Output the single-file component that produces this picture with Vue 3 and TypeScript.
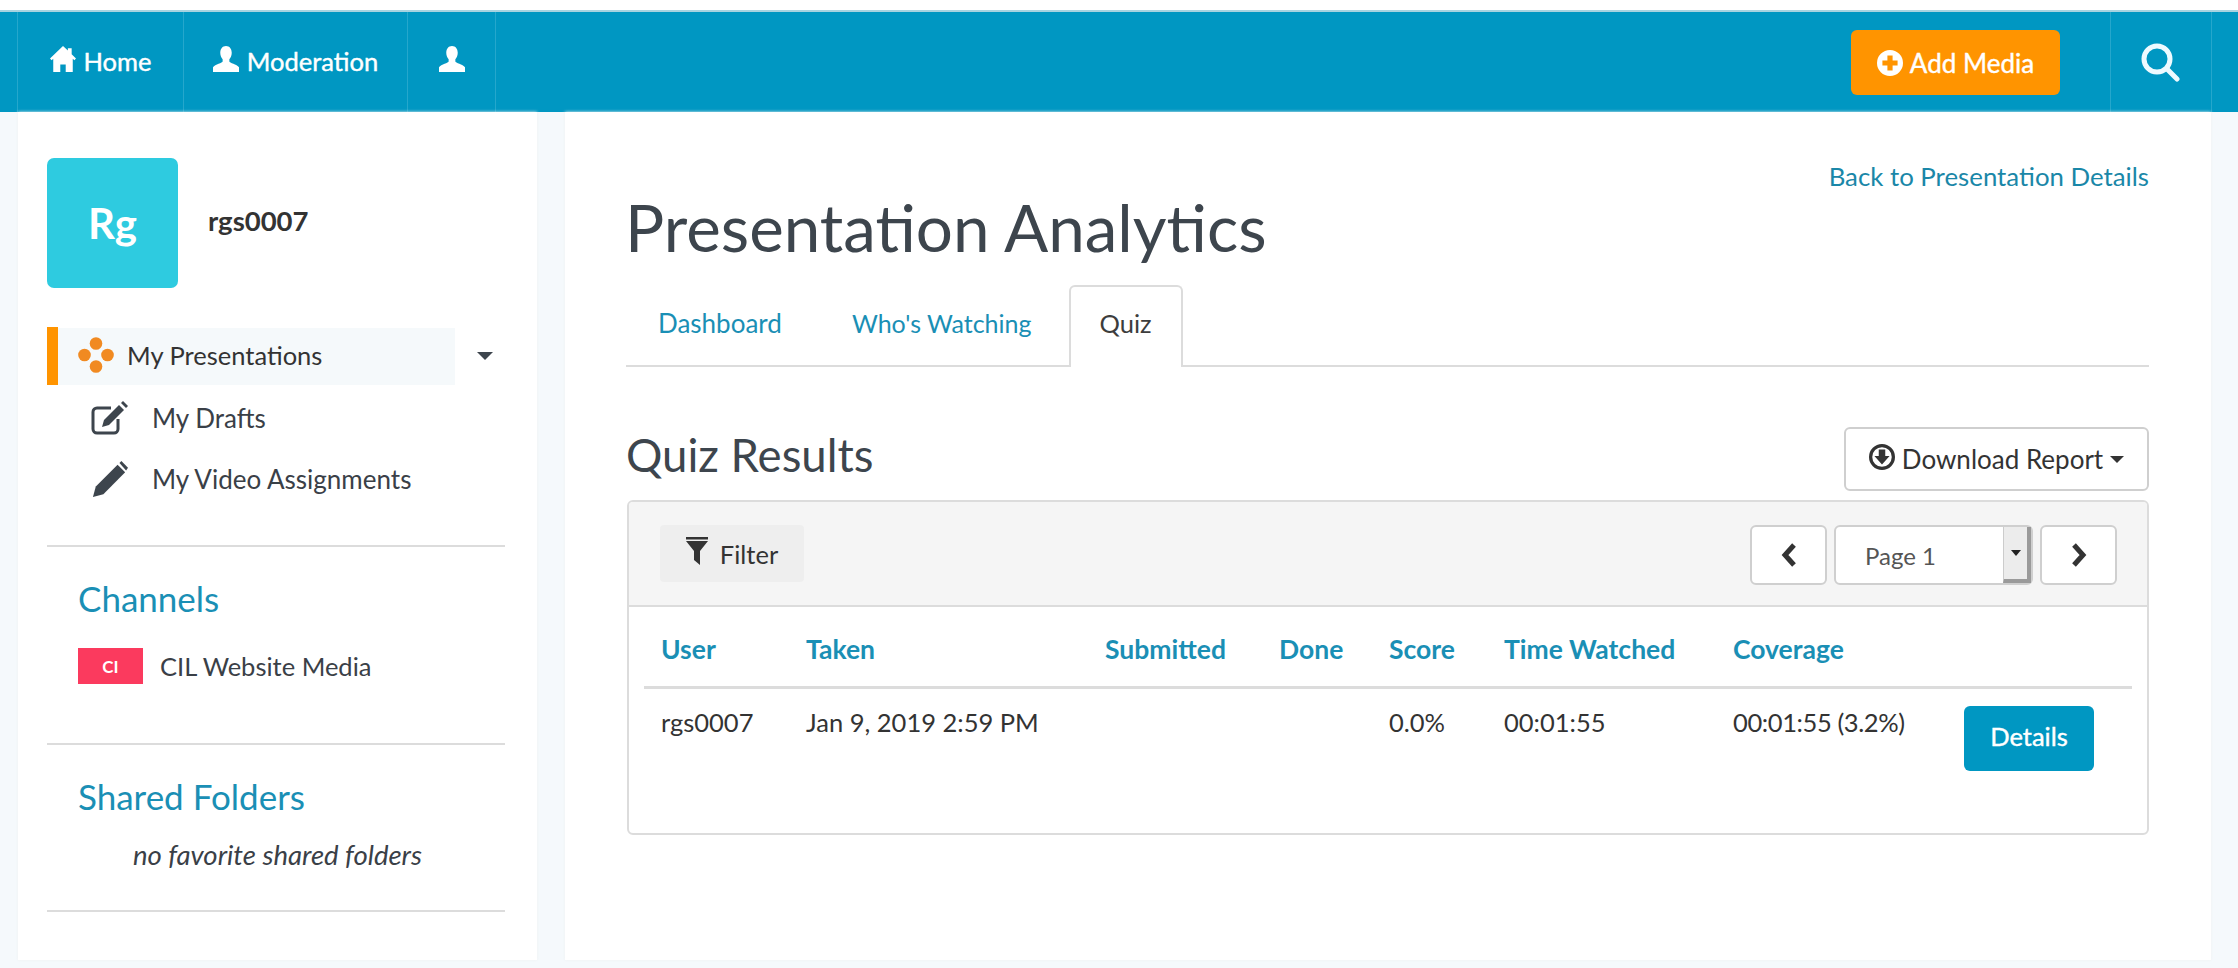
<template>
  <div class="page">
    <header class="topbar">
      <nav class="nav-left">
        <a v-for="item in navItems" :key="item.key" class="nav-item" :class="item.key">
          <svg v-if="item.key === 'home'" class="nav-icon" viewBox="0 0 24 24"><path :d="homePath" /></svg>
          <svg v-else class="nav-icon" viewBox="0 0 24 24"><path :d="userPath" /></svg>
          <span v-if="item.label">{{ item.label }}</span>
        </a>
      </nav>
      <div class="nav-right">
        <button class="add-media">
          <svg class="add-icon" viewBox="0 0 24 24"><path fill-rule="evenodd" d="M12 0a12 12 0 1 0 0 24a12 12 0 1 0 0-24zM9.6 5h4.800v4.600H19v4.800h-4.600V19H9.600v-4.600H5V9.600h4.600z" /></svg>
          Add Media
        </button>
        <a class="search-cell">
          <svg class="search-icon" viewBox="0 0 40 40"><circle cx="17" cy="17" r="13" /><path d="M27 27l10 10" /></svg>
        </a>
      </div>
    </header>

    <div class="columns">
      <aside class="sidebar">
        <div class="profile">
          <div class="avatar">Rg</div>
          <div class="username">rgs0007</div>
        </div>

        <div class="menu">
          <div class="menu-active">
            <div class="menu-active-inner">
              <svg class="flower" viewBox="0 0 36 36">
                <circle cx="18" cy="6.500" r="6.300" /><circle cx="6.500" cy="18" r="6.300" />
                <circle cx="29.500" cy="18" r="6.300" /><circle cx="18" cy="29.500" r="6.300" />
              </svg>
              My Presentations
            </div>
            <span class="caret big" />
          </div>
          <div class="menu-sub">
            <svg class="sub-icon" viewBox="0 0 38 34">
              <path class="stroke" d="M20 7H6a4 4 0 0 0-4 4v17a4 4 0 0 0 4 4h17a4 4 0 0 0 4-4V18" />
              <path d="M11 26l2-7L28 4l5 5-15 15z" /><path d="M30 2l2-2 5 5-2 2z" />
            </svg>
            My Drafts
          </div>
          <div class="menu-sub">
            <svg class="sub-icon" viewBox="0 0 38 38">
              <path d="M1 38l3-11L27 4l8 8-23 23z" /><path d="M29 2l2-2 7 7-2 3z" />
            </svg>
            My Video Assignments
          </div>
        </div>

        <div class="side-section channels">
          <h3>Channels</h3>
          <div class="channel-row"><span class="channel-badge">CI</span>CIL Website Media</div>
        </div>

        <div class="side-section folders">
          <h3>Shared Folders</h3>
          <p>no favorite shared folders</p>
        </div>
      </aside>

      <main class="content">
        <a class="back-link">Back to Presentation Details</a>
        <h1>Presentation Analytics</h1>

        <ul class="tabs">
          <li v-for="tab in tabs" :key="tab" :class="{ active: tab === 'Quiz' }">{{ tab }}</li>
        </ul>

        <div class="results-head">
          <h2>Quiz Results</h2>
          <button class="download">
            <svg class="dl-icon" viewBox="0 0 24 24"><path fill-rule="evenodd" d="M12 0a12 12 0 1 0 0 24a12 12 0 1 0 0-24zM12 3a9 9 0 1 1 0 18a9 9 0 1 1 0-18zM9 5h6v6h4l-7 8-7-8h4z" /></svg>
            Download Report
            <span class="caret" />
          </button>
        </div>

        <section class="panel">
          <div class="toolbar">
            <button class="filter">
              <svg class="filter-icon" viewBox="0 0 22 28"><path d="M0 0h22v2.500H0z" /><path d="M0 4h22l-8 10v14l-6-5V14z" /></svg>
              Filter
            </button>
            <div class="pager">
              <button class="page-btn">
                <svg viewBox="0 0 16 24"><path d="M13 2L4 12l9 10" /></svg>
              </button>
              <div class="page-select">
                <span>Page 1</span>
                <i class="select-arrow"><b /></i>
              </div>
              <button class="page-btn">
                <svg viewBox="0 0 16 24"><path d="M3 2l9 10-9 10" /></svg>
              </button>
            </div>
          </div>

          <table class="results">
            <colgroup>
              <col v-for="w in colWidths" :key="w.name" :style="{ width: w.px + 'px' }" />
            </colgroup>
            <thead>
              <tr>
                <th v-for="w in colWidths" :key="w.name">{{ w.name }}</th>
              </tr>
            </thead>
            <tbody>
              <tr>
                <td>rgs0007</td>
                <td>Jan 9, 2019 2:59 PM</td>
                <td></td>
                <td></td>
                <td>0.0%</td>
                <td>00:01:55</td>
                <td class="coverage">00:01:55 (3.2%)</td>
                <td class="action"><button class="details">Details</button></td>
              </tr>
            </tbody>
          </table>
        </section>
      </main>
    </div>
  </div>
</template>

<script setup lang="ts">
const navItems = [
  { key: 'home', label: 'Home' },
  { key: 'moderation', label: 'Moderation' },
  { key: 'profile', label: '' }
]

const tabs = ['Dashboard', "Who's Watching", 'Quiz']

const colWidths = [
  { name: 'User', px: 145 },
  { name: 'Taken', px: 299 },
  { name: 'Submitted', px: 174 },
  { name: 'Done', px: 110 },
  { name: 'Score', px: 115 },
  { name: 'Time Watched', px: 229 },
  { name: 'Coverage', px: 231 },
  { name: '', px: 185 }
]

const homePath = 'M12 0l4.500 4.200V2h3.500v5.500L24 11.500l-1.500 1.600-1.500-1.300V24h-6.500v-7h-5v7H3V11.800l-1.500 1.300L0 11.500z'
const userPath = 'M12 0c3.300 0 5.300 2.600 5.300 6.300 0 2.700-1 4.800-2.200 6v2c0 1.200 7 2.700 8.900 5.200V24H0v-4.500c1.900-2.500 8.900-4 8.900-5.200v-2c-1.200-1.200-2.200-3.300-2.200-6C6.700 2.600 8.700 0 12 0z'
</script>

<style>
html,
body {
  margin: 0;
  background: #f5f9fc;
}
</style>

<style scoped>
.page {
  width: 2238px;
  height: 968px;
  overflow: hidden;
  box-sizing: border-box;
  border-top: 10px solid #fff;
  font-family: Lato, "Open Sans", sans-serif;
  font-size: 25.5px;
  color: #333;
}

.topbar {
  height: 102px;
  box-sizing: border-box;
  border-top: 2px solid #a8d3e0;
  background: #0097c2;
  display: flex;
  justify-content: space-between;
  color: #fff;
}

.nav-left {
  display: flex;
  margin-left: 17px;
  border-left: 1px solid #25a7cc;
}

.nav-item {
  display: flex;
  align-items: center;
  justify-content: center;
  gap: 8px;
  padding-bottom: 2px;
  border-right: 1px solid #25a7cc;
  font-size: 25.5px;
  -webkit-text-stroke: 0.4px #fff;
}

.nav-item.home { width: 165px; }
.nav-item.moderation { width: 223px; }
.nav-item.profile { width: 87px; }

.nav-icon {
  width: 26px;
  height: 26px;
  fill: #fff;
  margin-top: -4px;
}

.nav-right {
  display: flex;
}

.add-media {
  align-self: flex-start;
  margin: 18px 50px 0 0;
  width: 209px;
  height: 65px;
  border: 0;
  border-radius: 6px;
  background: #ff9400;
  color: #fff;
  font: inherit;
  font-size: 26px;
  -webkit-text-stroke: 0.4px #fff;
  display: flex;
  align-items: center;
  justify-content: center;
  gap: 7px;
}

.add-icon {
  width: 26px;
  height: 26px;
  fill: #fff;
}

.search-cell {
  width: 100px;
  margin-right: 26px;
  border-left: 1px solid #25a7cc;
  border-right: 1px solid #25a7cc;
  display: flex;
  align-items: center;
  justify-content: center;
}

.search-icon {
  width: 40px;
  height: 40px;
  margin-left: -3px;
  fill: none;
  stroke: #eefaff;
  stroke-width: 5;
  stroke-linecap: round;
}

.columns {
  display: flex;
  height: 848px;
  padding-left: 18px;
  gap: 28px;
}

.sidebar,
.content {
  background: #fff;
  box-sizing: border-box;
  box-shadow: 0 0 3px #eef1f2;
}

.sidebar {
  width: 519px;
  padding: 46px 32px 0 29px;
}

.profile {
  display: flex;
  align-items: center;
  gap: 30px;
}

.avatar {
  width: 131px;
  height: 130px;
  border-radius: 7px;
  background: #2ecbe0;
  color: #fff;
  font-size: 42px;
  font-weight: 700;
  display: flex;
  align-items: center;
  justify-content: center;
}

.username {
  font-size: 27.5px;
  font-weight: 700;
  color: #333;
  margin-top: -6px;
}

.menu {
  margin-top: 39px;
  height: 218px;
  border-bottom: 2px solid #dcdcdc;
}

.menu-active {
  display: flex;
  align-items: center;
  height: 58px;
  border-left: 11px solid #ff9400;
}

.menu-active-inner {
  width: 397px;
  height: 57px;
  background: #f5f9fb;
  display: flex;
  align-items: center;
  box-sizing: border-box;
  padding: 0 0 2px 20px;
  gap: 13px;
}

.flower {
  width: 36px;
  height: 36px;
  fill: #f18a21;
}

.caret {
  display: inline-block;
  border-left: 7px solid transparent;
  border-right: 7px solid transparent;
  border-top: 7px solid #333;
}

.caret.big {
  margin-left: 22px;
  border-left-width: 8px;
  border-right-width: 8px;
  border-top-width: 8px;
  border-top-color: #3d454d;
}

.menu-sub {
  display: flex;
  align-items: center;
  gap: 23px;
  box-sizing: border-box;
  height: 61px;
  padding: 0 0 2px 44px;
  font-size: 26px;
  color: #3a4047;
}

.menu-sub:nth-child(2) {
  margin-top: 3px;
}

.sub-icon {
  width: 38px;
  height: 36px;
  fill: #3d454d;
}

.sub-icon .stroke {
  fill: none;
  stroke: #3d454d;
  stroke-width: 3;
}

.side-section {
  border-bottom: 2px solid #dcdcdc;
  box-sizing: border-box;
  padding-left: 31px;
}

.channels { height: 198px; }
.folders { height: 167px; }

.side-section h3 {
  margin: 0;
  padding-top: 30px;
  font-size: 35px;
  line-height: 42px;
  font-weight: 400;
  color: #1a8fb5;
}

.channel-row {
  display: flex;
  align-items: center;
  gap: 17px;
  margin-top: 29px;
  color: #3a4047;
}

.channel-badge {
  width: 65px;
  height: 36px;
  background: #fb3a5e;
  color: #fff;
  font-size: 17px;
  font-weight: 700;
  display: flex;
  align-items: center;
  justify-content: center;
}

.folders p {
  margin: 21px 0 0 55px;
  font-size: 27.5px;
  font-style: italic;
  color: #3a4047;
}

.content {
  width: 1646px;
  padding: 46px 62px 0 62px;
  position: relative;
}

.back-link {
  display: block;
  text-align: right;
  font-size: 25.8px;
  color: #1a87a8;
  line-height: 36px;
}

h1 {
  margin: -7px 0 0 -2px;
  font-size: 65.5px;
  line-height: 80px;
  font-weight: 400;
  color: #3d454d;
}

.tabs {
  list-style: none;
  margin: 18px 0 0 -1px;
  padding: 0;
  height: 80px;
  display: flex;
  border-bottom: 2px solid #dcdcdc;
}

.tabs li {
  box-sizing: border-box;
  height: 82px;
  line-height: 73px;
  padding: 0 36px 0 30px;
  font-size: 26px;
  color: #1a8fb5;
  border: 2px solid transparent;
  border-bottom: 0;
}

.tabs li:nth-child(2) {
  padding: 0 35px 0 30px;
  font-size: 25px;
}

.tabs li.active {
  width: 114px;
  padding: 0 0 0 29px;
  font-size: 25.5px;
  color: #3d3d3d;
  background: #fff;
  border-color: #dcdcdc;
  border-radius: 6px 6px 0 0;
}

.results-head {
  display: flex;
  align-items: center;
  justify-content: space-between;
  margin-top: 59px;
  height: 66px;
}

h2 {
  margin: 0 0 0 -1px;
  padding-bottom: 10px;
  font-size: 45.5px;
  font-weight: 400;
  color: #3d454d;
}

.download {
  width: 305px;
  height: 64px;
  border: 2px solid #cfcfcf;
  border-radius: 6px;
  background: #fff;
  font: inherit;
  font-size: 26px;
  color: #333;
  display: flex;
  align-items: center;
  justify-content: center;
  gap: 7px;
}

.dl-icon {
  width: 26px;
  height: 26px;
  fill: #333;
  margin-top: -4px;
}

.panel {
  margin-top: 8px;
  height: 335px;
  box-sizing: border-box;
  border: 2px solid #dcdcdc;
  border-radius: 6px;
}

.toolbar {
  height: 105px;
  box-sizing: border-box;
  background: #f5f5f5;
  border-bottom: 2px solid #dcdcdc;
  border-radius: 4px 4px 0 0;
  display: flex;
  justify-content: space-between;
  padding: 23px 30px 0 31px;
}

.filter {
  width: 144px;
  height: 57px;
  border: 0;
  border-radius: 4px;
  background: #eeeeee;
  font: inherit;
  color: #333;
  display: flex;
  align-items: center;
  justify-content: center;
  gap: 12px;
}

.filter-icon {
  width: 22px;
  height: 28px;
  fill: #333;
  margin-top: -6px;
}

.pager {
  display: flex;
  gap: 7px;
  height: 60px;
}

.page-btn {
  width: 77px;
  height: 60px;
  border: 2px solid #cfcfcf;
  border-radius: 6px;
  background: #fff;
  display: flex;
  align-items: center;
  justify-content: center;
}

.page-btn svg {
  width: 16px;
  height: 24px;
  fill: none;
  stroke: #333;
  stroke-width: 5;
}

.page-select {
  width: 199px;
  height: 60px;
  box-sizing: border-box;
  border: 2px solid #cfcfcf;
  border-radius: 6px;
  background: #fff;
  display: flex;
  align-items: center;
  justify-content: space-between;
  padding-left: 29px;
  font-size: 24px;
  color: #555;
}

.select-arrow {
  width: 28px;
  height: 56px;
  box-sizing: border-box;
  background: #ececec;
  border-left: 1px solid #ccc;
  border-right: 4px solid #9a9a9a;
  border-bottom: 4px solid #9a9a9a;
  display: flex;
  align-items: center;
  justify-content: center;
}

.select-arrow b {
  border-left: 5px solid transparent;
  border-right: 5px solid transparent;
  border-top: 6px solid #222;
}

.results {
  margin: 0 0 0 15px;
  border-collapse: collapse;
  table-layout: fixed;
  width: 1488px;
}

.results th {
  height: 75px;
  padding: 4px 0 0 17px;
  text-align: left;
  font-size: 26.5px;
  color: #1a8fb5;
  font-weight: 700;
  border-bottom: 3px solid #dcdcdc;
}

.results td {
  padding: 18px 0 0 17px;
  vertical-align: top;
  color: #333;
  white-space: nowrap;
}

.results td.coverage {
  letter-spacing: -0.4px;
}

.results td.action {
  padding-top: 17px;
}

.details {
  width: 130px;
  height: 65px;
  border: 0;
  border-radius: 6px;
  padding-bottom: 7px;
  background: #0097c2;
  color: #fff;
  font: inherit;
  -webkit-text-stroke: 0.4px #fff;
}
</style>
